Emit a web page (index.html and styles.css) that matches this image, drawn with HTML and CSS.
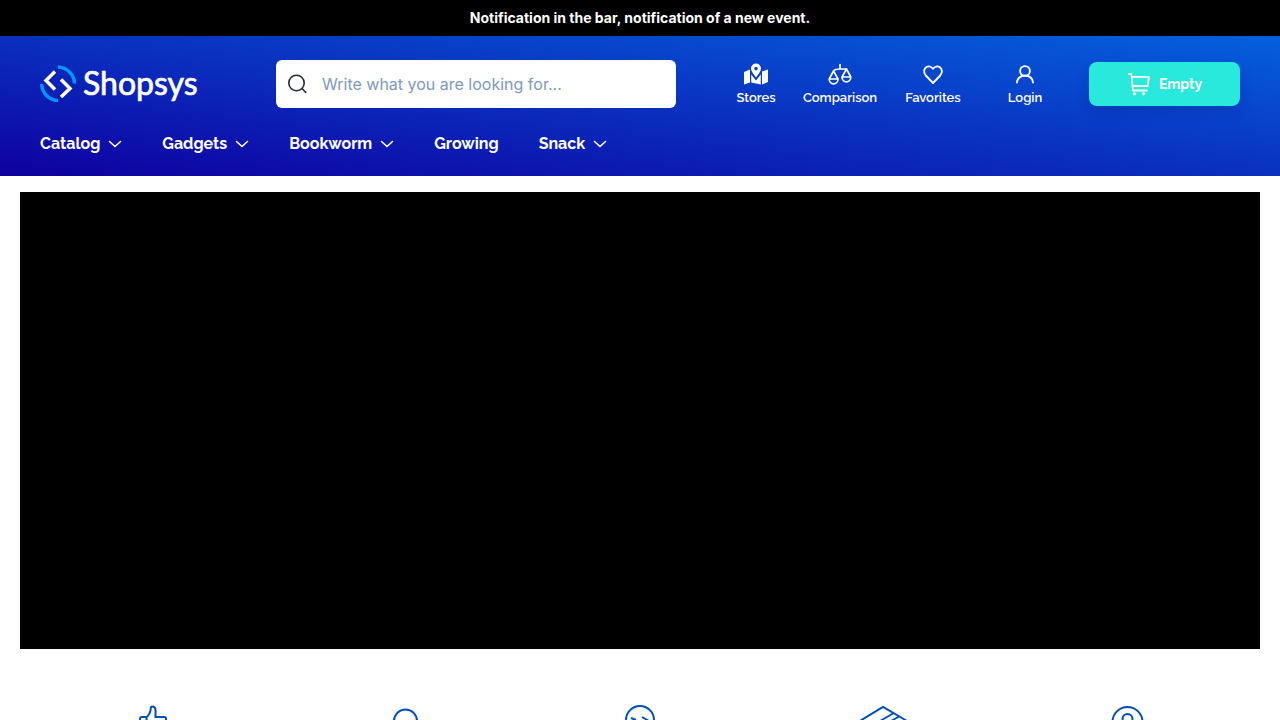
FILE: index.html
```html
<!DOCTYPE html>
<html lang="en">
<head>
<meta charset="utf-8">
<meta name="viewport" content="width=device-width, initial-scale=1">
<title>Shopsys</title>
<link rel="stylesheet" href="styles.css">
</head>
<body>
<div class="notice">Notification in the bar, notification of a new event.</div>
<header class="header">
  <div class="top">
    <a class="logo" href="#" aria-label="Shopsys">
      <svg width="160" height="40" viewBox="0 0 160 40" fill="none">
        <path d="M18 3A17 17 0 0 1 34.500 19.500M1.700 20A17 17 0 0 0 18 36.500" stroke="#0096ff" stroke-width="3.500"/>
        <path d="M15 7.500L6 16.500L15 25.500M21 15.500L30 24.500L21 33" stroke="#fff" stroke-width="3.500"/>
        <text class="logo-text" x="43" y="31">Shopsys</text>
      </svg>
    </a>
    <form class="search" role="search">
      <button class="search-button" type="submit" aria-label="Search">
        <svg width="20" height="20" viewBox="0 0 20 20" fill="none" stroke="#25283d" stroke-width="1.600" stroke-linecap="round"><circle cx="8.500" cy="9" r="7.700"/><path d="M14 14.500L17.800 18.500"/></svg>
      </button>
      <input class="search-input" type="search" aria-label="Search" placeholder="Write what you are looking for...">
    </form>
    <nav class="actions" aria-label="User">
      <a class="action" href="#">
        <svg width="24" height="24" viewBox="0 0 24 24" fill="#fff"><path fill-rule="evenodd" d="M12 .5a5 5 0 0 1 5 5c0 3-3 6-5 9-2-3-5-6-5-9a5 5 0 0 1 5-5zm0 3.300a1.800 1.800 0 1 0 0 3.600 1.800 1.800 0 0 0 0-3.600z"/><path d="M0 9L6 6.500v13L0 21.500zM7.200 11.500L12 17.500l4.800-6v10l-9.600-2zM18 8.500l6-2v12.500L18 21.500z"/></svg>
        <span>Stores</span>
      </a>
      <a class="action" href="#">
        <svg width="24" height="24" viewBox="0 0 24 24" fill="none" stroke="#fff" stroke-width="1.700" stroke-linejoin="round" stroke-linecap="round"><path d="M12 1.500V6M5.500 8Q7 6 12 6T18.500 6M5.500 8L1.200 16H10L5.500 8M18.500 6L14 14H22.800L18.500 6M1.200 16a4.400 4.800 0 0 0 8.800 0M14 14a4.400 4.800 0 0 0 8.800 0"/></svg>
        <span>Comparison</span>
      </a>
      <a class="action" href="#">
        <svg width="24" height="24" viewBox="0 0 24 24" fill="none" stroke="#fff" stroke-width="1.900" stroke-linejoin="round"><path d="M12 20L4.800 12.500C2.200 9.500 2.800 6 5.200 4.300C7.500 2.700 10.300 3.500 12 5.800C13.700 3.500 16.500 2.700 18.800 4.300C21.200 6 21.800 9.500 19.200 12.500Z"/></svg>
        <span>Favorites</span>
      </a>
      <a class="action action-login" href="#">
        <svg width="24" height="24" viewBox="0 0 24 24" fill="none" stroke="#fff" stroke-width="1.900" stroke-linecap="round"><circle cx="12" cy="8" r="4.900"/><path d="M4 19.500a8 7 0 0 1 16 0"/></svg>
        <span>Login</span>
      </a>
    </nav>
    <a class="cart" href="#">
      <svg width="24" height="24" viewBox="0 0 24 24" fill="none" stroke="#fff" stroke-width="1.800" stroke-linecap="round" stroke-linejoin="round"><path d="M2 2H4.300L6 18.500H20M4.600 4.800H21.800L20.800 14H5.500"/><circle cx="7.500" cy="21.800" r="1.200" fill="#fff" stroke-width=".8"/><circle cx="16.500" cy="21.800" r="1.200" fill="#fff" stroke-width=".8"/></svg>
      <span>Empty</span>
    </a>
  </div>
  <nav class="menu" aria-label="Main">
    <a href="#">Catalog<svg class="chevron" viewBox="0 0 14 14"><path d="M1.500 4.500L7 9.500L12.500 4.500"/></svg></a>
    <a href="#">Gadgets<svg class="chevron" viewBox="0 0 14 14"><path d="M1.500 4.500L7 9.500L12.500 4.500"/></svg></a>
    <a href="#">Bookworm<svg class="chevron" viewBox="0 0 14 14"><path d="M1.500 4.500L7 9.500L12.500 4.500"/></svg></a>
    <a href="#">Growing</a>
    <a href="#">Snack<svg class="chevron" viewBox="0 0 14 14"><path d="M1.500 4.500L7 9.500L12.500 4.500"/></svg></a>
  </nav>
</header>
<main>
  <section class="banner" aria-label="Banner"></section>
  <section class="benefits" aria-label="Benefits">
    <svg class="benefit" viewBox="0 0 48 48"><path d="M12 43V14Q12 12 14 12H18.500Q22.500 9 22.800 3Q22.800 1.500 24 1.500Q27.500 1.500 27.500 5V12H36Q38.500 12 38 15L36 30Q35 34 31 34H12M18.500 12V34"/></svg>
    <svg class="benefit" viewBox="0 0 48 48"><circle cx="33.500" cy="16" r="11.500"/><path d="M13 44Q14 30 33 30T44 44"/></svg>
    <svg class="benefit" viewBox="0 0 48 48"><circle cx="24" cy="15" r="14"/><path d="M15 13L20 15M26 12L33 16M17 22Q24 27 31 22"/></svg>
    <svg class="benefit" viewBox="0 0 48 48"><path d="M0 16L23 2L47 16V40L23 47L0 40ZM20 16L34 8M31 16L40 11"/></svg>
    <svg class="benefit" viewBox="0 0 48 48"><path d="M23.500 44C18.500 35 8.500 26 8.500 17A15 15 0 0 1 38.500 17C38.500 26 28.500 35 23.500 44Z"/><circle cx="23.500" cy="14" r="5"/></svg>
  </section>
</main>
</body>
</html>
```
FILE: styles.css
```css
* {
  box-sizing: border-box;
}

body {
  margin: 0;
  background: #fff;
  color: #25283d;
  font-family: Inter, sans-serif;
}

a {
  color: #fff;
  text-decoration: none;
}

svg {
  display: block;
  flex-shrink: 0;
}

.notice {
  padding: 8px 20px;
  background: #000;
  color: #fff;
  font-size: 14px;
  font-weight: 700;
  line-height: 20px;
  text-align: center;
}

.header {
  padding: 24px 40px 20px;
  background: linear-gradient(to top right, #0f00a0, #0560de);
  font-family: Raleway, Lato, sans-serif;
}

.top {
  display: flex;
  align-items: center;
}

.logo {
  margin-right: 76px;
}

.logo svg {
  overflow: visible;
}

.logo-text {
  fill: #fff;
  stroke: #fff;
  stroke-width: 0.7px;
  font-family: Lato, sans-serif;
  font-size: 32px;
}

.search {
  display: flex;
  flex: 0 1 400px;
  align-items: center;
  height: 48px;
  padding: 0 12px;
  border-radius: 6px;
  background: #fff;
}

.search-button {
  padding: 0;
  border: 0;
  background: none;
}

.search-input {
  flex: 1;
  min-width: 0;
  margin-left: 14px;
  padding: 0;
  border: 0;
  outline: 0;
  background: none;
  font-family: Inter, sans-serif;
  font-size: 16px;
  line-height: 24px;
}

.search-input::placeholder {
  color: #7c98c3;
  opacity: 1;
}

.actions {
  display: flex;
  gap: 20px;
  margin-left: auto;
}

.action {
  display: flex;
  flex-direction: column;
  align-items: center;
  min-width: 48px;
  font-size: 13px;
  font-weight: 600;
  line-height: 20px;
  padding-top: 3px;
}

.action svg {
  margin-bottom: 1px;
}

.action:nth-child(2) {
  min-width: 80px;
}

.action:nth-child(3) {
  min-width: 66px;
}

.action-login {
  min-width: 78px;
}

.cart {
  display: flex;
  align-items: center;
  justify-content: center;
  gap: 8px;
  width: 151px;
  height: 44px;
  margin-left: 25px;
  border-radius: 8px;
  background: #29e8dc;
  box-shadow: 0 8px 14px rgba(0, 20, 100, 0.15);
  font-size: 14px;
  font-weight: 700;
}

.menu {
  display: flex;
  gap: 40px;
  margin-top: 24px;
  font-size: 16px;
  font-weight: 700;
  line-height: 24px;
}

.menu a {
  display: flex;
  align-items: center;
  gap: 8px;
}

.chevron {
  width: 14px;
  height: 14px;
  fill: none;
  stroke: #fff;
  stroke-width: 1.6;
  stroke-linecap: round;
  stroke-linejoin: round;
}

.banner {
  height: 457px;
  margin: 16px 20px 56px;
  background: #000;
}

.benefits {
  display: grid;
  grid-template-columns: repeat(5, 1fr);
  justify-items: center;
  padding: 0 30px;
}

.benefit {
  width: 48px;
  height: 48px;
  fill: none;
  stroke: #004eb6;
  stroke-width: 2;
}
```
